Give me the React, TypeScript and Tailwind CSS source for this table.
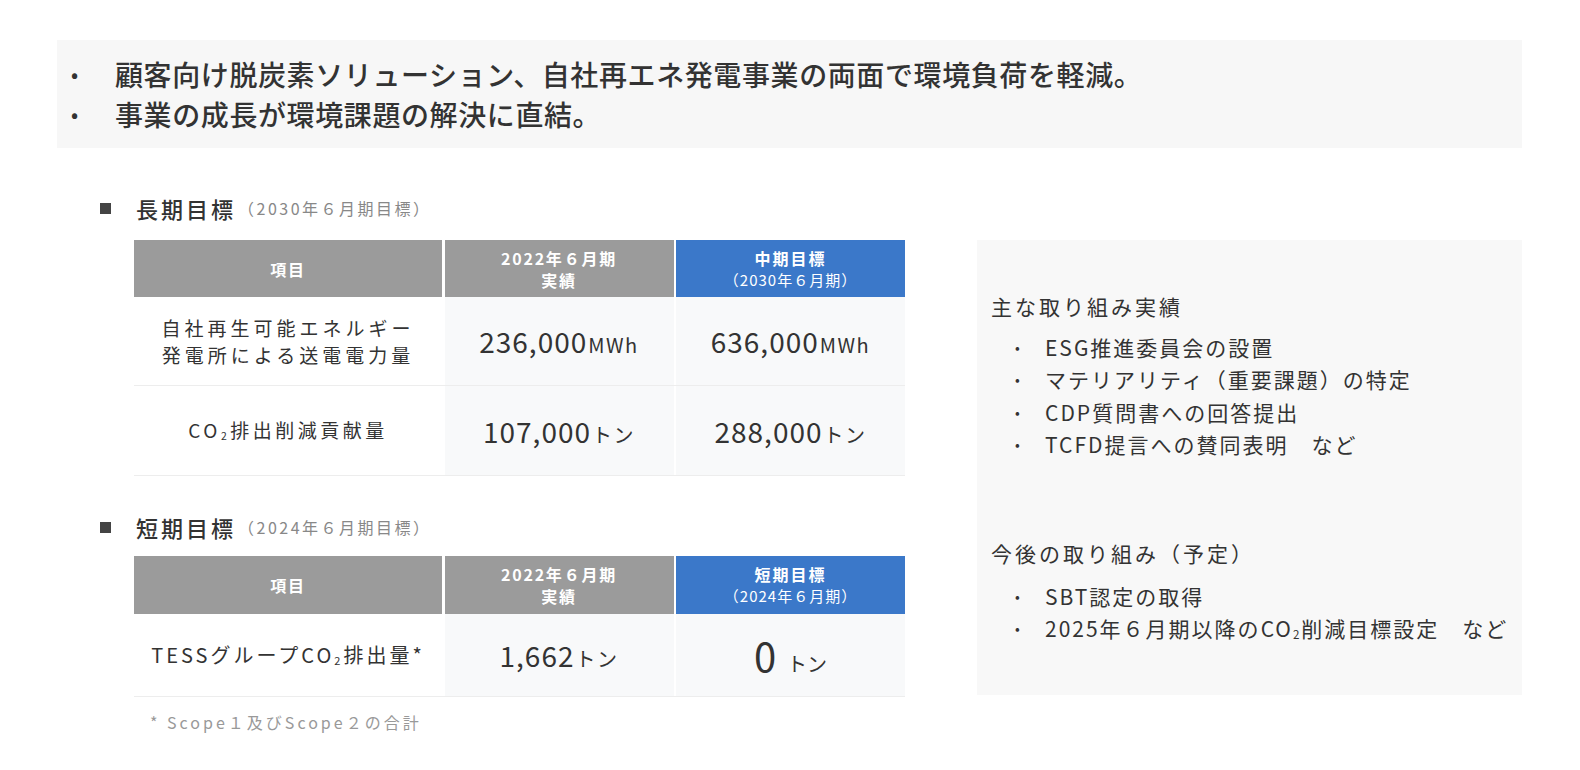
const Co2 = () => (
  <>
    CO<span className="text-[0.55em] align-[-0.15em]">2</span>
  </>
);

const Heading = ({ title, sub }: { title: string; sub: string }) => (
  <div className="flex h-[30px] items-center">
    <span className="h-[11px] w-[11px] bg-[#444]" />
    <span className="ml-[25px] text-[22px] font-medium tracking-[3px] text-[#333]">{title}</span>
    <span className="ml-[2px] text-[16px] tracking-[2.5px] text-[#888]">（{sub}）</span>
  </div>
);

const HeadCell = ({ children, blue }: { children: React.ReactNode; blue?: boolean }) => (
  <div
    className={`flex flex-col items-center justify-center text-[16px] leading-[22px] tracking-[1.8px] text-white ${
      blue ? "bg-[#3b78c9]" : "bg-[#9b9b9b]"
    }`}
  >
    {children}
  </div>
);

const Value = ({ num, unit, big }: { num: string; unit: string; big?: boolean }) => (
  <div className="flex items-center justify-center bg-[#f8f9fa] text-[#333]">
    <div className="flex items-baseline">
      <span className={big ? "text-[40px] tracking-[1px]" : "text-[28px] tracking-[1px]"}>{num}</span>
      <span className={big ? "ml-[10px] text-[20px]" : "ml-[1px] text-[20px] tracking-[1.5px]"}>{unit}</span>
    </div>
  </div>
);

const Bullet = ({ children }: { children: React.ReactNode }) => (
  <li className="flex h-[32.5px] items-center">
    <span className="w-[32px] pl-[2px] text-[14px]">•</span>
    <span className="tracking-[2px]">{children}</span>
  </li>
);

export default function App() {
  return (
    <div className="h-[770px] w-[1580px] bg-white font-['Noto_Sans_CJK_JP','Noto_Sans',sans-serif] text-[#333]">
      <div className="pt-[40px] pl-[57px]">
        <div className="h-[108px] w-[1465px] bg-[#f7f7f7] pt-[14px] text-[28px] leading-[40px] font-medium tracking-[0.6px]">
          <div className="flex">
            <span className="w-[58px] pl-[14px] text-[20px]">•</span>
            <span>顧客向け脱炭素ソリューション、自社再エネ発電事業の両面で環境負荷を軽減。</span>
          </div>
          <div className="flex">
            <span className="w-[58px] pl-[14px] text-[20px]">•</span>
            <span>事業の成長が環境課題の解決に直結。</span>
          </div>
        </div>
      </div>

      <div className="flex">
        <div className="w-[905px] pl-[100px]">
          <div className="mt-[45px]">
            <Heading title="長期目標" sub="2030年６月期目標" />
          </div>
          <div className="mt-[17px] ml-[34px] grid grid-cols-[308px_229px_229px] gap-x-[2.5px]">
            <div className="grid h-[57px] grid-cols-subgrid col-span-3 gap-x-[2.5px] font-bold">
              <HeadCell>項目</HeadCell>
              <HeadCell>
                <span>2022年６月期</span>
                <span>実績</span>
              </HeadCell>
              <HeadCell blue>
                <span className="tracking-[2px]">中期目標</span>
                <span className="text-[15px] font-normal tracking-[1px]">（2030年６月期）</span>
              </HeadCell>
            </div>
            <div className="col-span-3 grid h-[89px] grid-cols-subgrid gap-x-[2.5px] border-b border-[#ededed]">
              <div className="flex flex-col items-center justify-center text-[19px] leading-[27px] tracking-[4px]">
                <span>自社再生可能エネルギー</span>
                <span>発電所による送電電力量</span>
              </div>
              <Value num="236,000" unit="MWh" />
              <Value num="636,000" unit="MWh" />
            </div>
            <div className="col-span-3 grid h-[90px] grid-cols-subgrid gap-x-[2.5px] border-b border-[#ededed]">
              <div className="flex items-center justify-center text-[19px] tracking-[3.5px]">
                <span>
                  <Co2 />
                  排出削減貢献量
                </span>
              </div>
              <Value num="107,000" unit="トン" />
              <Value num="288,000" unit="トン" />
            </div>
          </div>

          <div className="mt-[36px]">
            <Heading title="短期目標" sub="2024年６月期目標" />
          </div>
          <div className="mt-[14px] ml-[34px] grid grid-cols-[308px_229px_229px] gap-x-[2.5px]">
            <div className="col-span-3 grid h-[58px] grid-cols-subgrid gap-x-[2.5px] font-bold">
              <HeadCell>項目</HeadCell>
              <HeadCell>
                <span>2022年６月期</span>
                <span>実績</span>
              </HeadCell>
              <HeadCell blue>
                <span className="tracking-[2px]">短期目標</span>
                <span className="text-[15px] font-normal tracking-[1px]">（2024年６月期）</span>
              </HeadCell>
            </div>
            <div className="col-span-3 grid h-[83px] grid-cols-subgrid gap-x-[2.5px] border-b border-[#ededed]">
              <div className="flex items-center justify-center text-[20px] tracking-[3px]">
                <span>
                  TESSグループ
                  <Co2 />
                  排出量*
                </span>
              </div>
              <Value num="1,662" unit="トン" />
              <Value num="0" unit="トン" big />
            </div>
          </div>
          <div className="mt-[15px] ml-[50px] text-[16px] leading-[20px] tracking-[3px] text-[#999]">
            * Scope１及びScope２の合計
          </div>
        </div>

        <div className="mt-[92px] ml-[72px] h-[455px] w-[545px] bg-[#f8f8f8] pl-[14px] pt-[52px] text-[21px]">
          <div className="text-[21px] leading-[28px] tracking-[3px]">主な取り組み実績</div>
          <ul className="mt-[11px] pl-[22px]">
            <Bullet>ESG推進委員会の設置</Bullet>
            <Bullet>マテリアリティ（重要課題）の特定</Bullet>
            <Bullet>CDP質問書への回答提出</Bullet>
            <Bullet>TCFD提言への賛同表明　など</Bullet>
          </ul>
          <div className="mt-[78px] text-[21px] leading-[28px] tracking-[3px]">今後の取り組み（予定）</div>
          <ul className="mt-[13px] pl-[22px]">
            <Bullet>SBT認定の取得</Bullet>
            <Bullet>
              2025年６月期以降の<Co2 />削減目標設定　など
            </Bullet>
          </ul>
        </div>
      </div>
    </div>
  );
}
